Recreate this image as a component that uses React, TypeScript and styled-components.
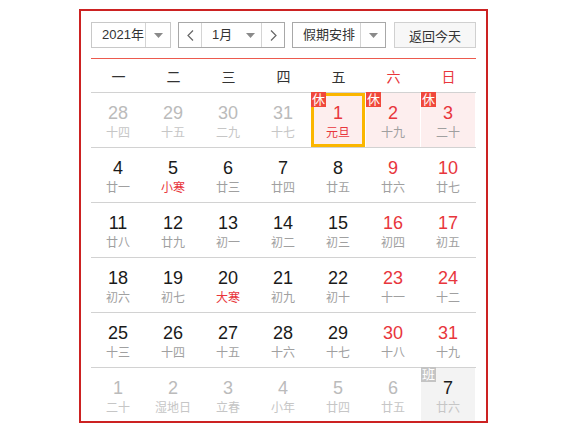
import React from "react";
import styled, { createGlobalStyle } from "styled-components";

const Global = createGlobalStyle`
  html, body { margin: 0; padding: 0; background: #fff; }
  body { font-family: "Liberation Sans", "Noto Sans CJK SC", sans-serif; }
`;

const Page = styled.div`
  padding: 9px 0 0 79px;
`;

const Box = styled.div`
  box-sizing: border-box;
  width: 409px;
  height: 414px;
  border: 2px solid #cc2222;
  padding: 11px 10px 0 10px;
  overflow: hidden;
`;

const Toolbar = styled.div`
  display: flex;
  height: 26px;
  gap: 7px;
  font-size: 13px;
  color: #333;
`;

const Control = styled.div<{ $w: number; $border: string }>`
  box-sizing: border-box;
  width: ${(p) => p.$w}px;
  height: 26px;
  border: 1px solid ${(p) => p.$border};
  background: #fff;
  display: flex;
  align-items: stretch;
`;

const Label = styled.div`
  flex: 1;
  display: flex;
  align-items: center;
  padding-left: 10px;
  line-height: 24px;
  white-space: nowrap;
`;

const ArrowSeg = styled.div<{ $w: number; $divider?: boolean }>`
  width: ${(p) => p.$w}px;
  display: flex;
  align-items: center;
  justify-content: center;
  border-left: ${(p) => (p.$divider ? "1px solid #d4d4d4" : "none")};
`;

const NavSeg = styled.div<{ $w: number; $side: "l" | "r" }>`
  width: ${(p) => p.$w}px;
  display: flex;
  align-items: center;
  justify-content: center;
  ${(p) => (p.$side === "l" ? "border-right: 1px solid #d4d4d4;" : "border-left: 1px solid #d4d4d4;")}
`;

const TodayButton = styled.div`
  box-sizing: border-box;
  width: 82px;
  margin-left: 1px;
  height: 26px;
  border: 1px solid #d0d0d0;
  background: #f7f7f7;
  display: flex;
  align-items: center;
  justify-content: center;
`;

const RedLine = styled.div`
  margin-top: 10px;
  height: 1px;
  background: #ec5a4e;
`;

const HeaderRow = styled.div`
  display: grid;
  grid-template-columns: repeat(7, 55px);
  height: 33px;
  border-bottom: 1px solid #d2d2d2;
  align-items: center;
`;

const HeaderCell = styled.div<{ $weekend?: boolean }>`
  text-align: center;
  font-size: 14px;
  color: ${(p) => (p.$weekend ? "#e8363c" : "#333")};
`;

const Week = styled.div<{ $last?: boolean }>`
  display: grid;
  grid-template-columns: repeat(7, 55px);
  height: 55px;
  box-sizing: border-box;
  border-bottom: ${(p) => (p.$last ? "none" : "1px solid #d2d2d2")};
`;

type Kind = "normal" | "holiday" | "work";

const Cell = styled.div<{ $kind: Kind; $selected?: boolean }>`
  position: relative;
  margin-right: 1px;
  height: 54px;
  box-sizing: border-box;
  padding-top: 10px;
  text-align: center;
  background: ${(p) =>
    p.$kind === "holiday" ? "#fdeeee" : p.$kind === "work" ? "#f3f3f3" : "transparent"};
  box-shadow: ${(p) => (p.$selected ? "inset 0 0 0 3px #fbb600" : "none")};
`;

const DayNum = styled.div<{ $tone: "dark" | "red" | "gray" }>`
  font-size: 18px;
  line-height: 20px;
  color: ${(p) => (p.$tone === "red" ? "#e8363c" : p.$tone === "gray" ? "#bbbbbb" : "#1a1a1a")};
`;

const Lunar = styled.div<{ $tone: "gray" | "red" | "light" }>`
  font-size: 12px;
  line-height: 16px;
  margin-top: 2px;
  color: ${(p) => (p.$tone === "red" ? "#e8363c" : p.$tone === "light" ? "#c6c6c6" : "#a0a0a0")};
`;

const Badge = styled.div<{ $work?: boolean }>`
  position: absolute;
  top: -1px;
  left: 0;
  width: 15px;
  height: 15px;
  line-height: 15px;
  font-size: 13px;
  text-align: center;
  color: #fff;
  background: ${(p) => (p.$work ? "#c4c4c4" : "#f0483c")};
`;

const Caret = () => (
  <svg width="9" height="5" viewBox="0 0 9 5">
    <path d="M0 0 L9 0 L4.5 5 Z" fill="#8a8a8a" />
  </svg>
);

const Chevron = ({ dir }: { dir: "l" | "r" }) => (
  <svg width="7" height="11" viewBox="0 0 7 11">
    <path
      d={dir === "l" ? "M6 0.5 L1 5.5 L6 10.5" : "M1 0.5 L6 5.5 L1 10.5"}
      fill="none"
      stroke="#666"
      strokeWidth="1.2"
    />
  </svg>
);

type Day = {
  n: number;
  l: string;
  num: "dark" | "red" | "gray";
  lun: "gray" | "red" | "light";
  kind?: Kind;
  badge?: "休" | "班";
  selected?: boolean;
};

const d = (
  n: number,
  l: string,
  num: Day["num"] = "dark",
  lun: Day["lun"] = "gray",
  extra: Partial<Day> = {}
): Day => ({ n, l, num, lun, ...extra });

const weeks: Day[][] = [
  [
    d(28, "十四", "gray", "light"),
    d(29, "十五", "gray", "light"),
    d(30, "二九", "gray", "light"),
    d(31, "十七", "gray", "light"),
    d(1, "元旦", "red", "red", { kind: "holiday", badge: "休", selected: true }),
    d(2, "十九", "red", "gray", { kind: "holiday", badge: "休" }),
    d(3, "二十", "red", "gray", { kind: "holiday", badge: "休" }),
  ],
  [
    d(4, "廿一"),
    d(5, "小寒", "dark", "red"),
    d(6, "廿三"),
    d(7, "廿四"),
    d(8, "廿五"),
    d(9, "廿六", "red"),
    d(10, "廿七", "red"),
  ],
  [
    d(11, "廿八"),
    d(12, "廿九"),
    d(13, "初一"),
    d(14, "初二"),
    d(15, "初三"),
    d(16, "初四", "red"),
    d(17, "初五", "red"),
  ],
  [
    d(18, "初六"),
    d(19, "初七"),
    d(20, "大寒", "dark", "red"),
    d(21, "初九"),
    d(22, "初十"),
    d(23, "十一", "red"),
    d(24, "十二", "red"),
  ],
  [
    d(25, "十三"),
    d(26, "十四"),
    d(27, "十五"),
    d(28, "十六"),
    d(29, "十七"),
    d(30, "十八", "red"),
    d(31, "十九", "red"),
  ],
  [
    d(1, "二十", "gray", "light"),
    d(2, "湿地日", "gray", "light"),
    d(3, "立春", "gray", "light"),
    d(4, "小年", "gray", "light"),
    d(5, "廿四", "gray", "light"),
    d(6, "廿五", "gray", "light"),
    d(7, "廿六", "dark", "light", { kind: "work", badge: "班" }),
  ],
];

const weekdays = ["一", "二", "三", "四", "五", "六", "日"];

export default function App() {
  return (
    <>
      <Global />
      <Page>
        <Box>
          <Toolbar>
            <Control $w={80} $border="#c8c8c8">
              <Label>2021年</Label>
              <ArrowSeg $w={24} $divider>
                <Caret />
              </ArrowSeg>
            </Control>
            <Control $w={107} $border="#a8a8a8">
              <NavSeg $w={22} $side="l">
                <Chevron dir="l" />
              </NavSeg>
              <Label>1月</Label>
              <ArrowSeg $w={22}>
                <Caret />
              </ArrowSeg>
              <NavSeg $w={22} $side="r">
                <Chevron dir="r" />
              </NavSeg>
            </Control>
            <Control $w={94} $border="#a8a8a8">
              <Label>假期安排</Label>
              <ArrowSeg $w={24} $divider>
                <Caret />
              </ArrowSeg>
            </Control>
            <TodayButton>返回今天</TodayButton>
          </Toolbar>
          <RedLine />
          <HeaderRow>
            {weekdays.map((w, i) => (
              <HeaderCell key={w} $weekend={i >= 5}>
                {w}
              </HeaderCell>
            ))}
          </HeaderRow>
          {weeks.map((week, wi) => (
            <Week key={wi} $last={wi === weeks.length - 1}>
              {week.map((day, di) => (
                <Cell key={di} $kind={day.kind ?? "normal"} $selected={day.selected}>
                  {day.badge && <Badge $work={day.badge === "班"}>{day.badge}</Badge>}
                  <DayNum $tone={day.num}>{day.n}</DayNum>
                  <Lunar $tone={day.lun}>{day.l}</Lunar>
                </Cell>
              ))}
            </Week>
          ))}
        </Box>
      </Page>
    </>
  );
}
